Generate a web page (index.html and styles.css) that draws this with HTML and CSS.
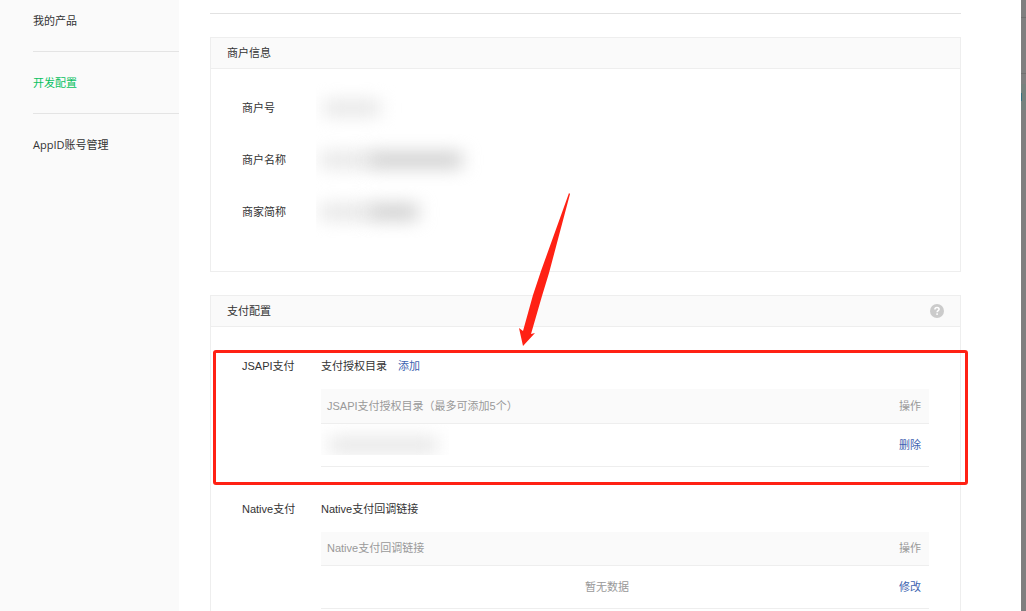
FILE: index.html
```html
<!DOCTYPE html>
<html lang="zh-CN">
<head>
    <meta charset="utf-8">
    <title>开发配置</title>
    <link rel="stylesheet" href="styles.css">
</head>
<body>
    <div class="page">
        <nav class="sidebar">
            <ul>
                <li><a href="#">我的产品</a></li>
                <li><a href="#" class="active">开发配置</a></li>
                <li><a href="#">AppID账号管理</a></li>
            </ul>
        </nav>

        <main class="content">
            <hr>

            <section class="panel">
                <h2 class="panel-header">商户信息</h2>
                <dl class="info">
                    <dt>商户号</dt>
                    <dd><span class="masked short"></span></dd>
                    <dt>商户名称</dt>
                    <dd><span class="masked light"></span><span class="masked long"></span></dd>
                    <dt>商家简称</dt>
                    <dd><span class="masked light"></span><span class="masked medium"></span></dd>
                </dl>
            </section>

            <section class="panel payment">
                <h2 class="panel-header">
                    支付配置
                    <button type="button" class="help" aria-label="帮助">
                        <svg width="14" height="14" viewBox="0 0 14 14">
                            <circle cx="7" cy="7" r="7" fill="#cbcbcb"/>
                            <path d="M4.9 5.5C4.9 4.1 5.8 3.5 7 3.5s2.1.7 2.1 1.8C9.1 6.6 7.1 6.7 7.1 8.3" fill="none" stroke="#fff" stroke-width="1.5"/>
                            <rect x="6.3" y="9.3" width="1.6" height="1.6" fill="#fff"/>
                        </svg>
                    </button>
                </h2>

                <div class="config highlighted">
                    <h3>JSAPI支付</h3>
                    <div class="config-body">
                        <p>支付授权目录 <a href="#">添加</a></p>
                        <table>
                            <thead>
                                <tr><th>JSAPI支付授权目录（最多可添加5个）</th><th class="action">操作</th></tr>
                            </thead>
                            <tbody>
                                <tr><td class="masked-cell"><div><span class="masked path"></span></div></td><td class="action"><a href="#">删除</a></td></tr>
                            </tbody>
                        </table>
                    </div>
                </div>

                <div class="config">
                    <h3>Native支付</h3>
                    <div class="config-body">
                        <p>Native支付回调链接</p>
                        <table>
                            <thead>
                                <tr><th>Native支付回调链接</th><th class="action">操作</th></tr>
                            </thead>
                            <tbody>
                                <tr><td class="empty">暂无数据</td><td class="action"><a href="#">修改</a></td></tr>
                            </tbody>
                        </table>
                    </div>
                </div>

                <svg class="arrow" width="18" height="154" viewBox="0 0 18 154" aria-hidden="true">
                    <path d="M51 0L52 1L31 80L24 103L13 141L17 140L5 153L1 135L5 138L15 102L23 78Z" fill="#ff2114"/>
                </svg>
            </section>
        </main>

        <div class="edge"></div>
    </div>
</body>
</html>
```

FILE: styles.css
```css
* {
    box-sizing: border-box;
}
body {
    margin: 0;
    font: 11px/18px "Liberation Sans", "Noto Sans CJK SC", sans-serif;
    color: #333;
    background: #fff;
}
h2, h3, p, ul, dl, dd {
    margin: 0;
    padding: 0;
    font-size: 11px;
    font-weight: normal;
}
a {
    color: #3d63b0;
    text-decoration: none;
}
.page {
    display: flex;
    height: 100vh;
    overflow: hidden;
}

/* sidebar */
.sidebar {
    flex: 0 0 179px;
    padding-left: 33px;
    background: #fafafa;
}
.sidebar ul {
    list-style: none;
}
.sidebar li {
    padding: 22px 0 21px;
    border-bottom: 1px solid #e4e4e4;
}
.sidebar li:first-child {
    padding-top: 12px;
}
.sidebar li:last-child {
    border-bottom: none;
}
.sidebar a {
    display: block;
    color: #333;
    font-family: "Open Sans", "Noto Sans CJK SC", sans-serif;
}
.sidebar a.active {
    color: #07c160;
}

/* content */
.content {
    flex: 1;
    min-width: 0;
    padding: 13px 60px 0 31px;
}
hr {
    height: 1px;
    margin: 0 0 23px;
    border: none;
    background: #e2e2e2;
}
.panel {
    position: relative;
    margin-bottom: 23px;
    border: 1px solid #eee;
}
.panel.payment {
    padding-bottom: 32px;
}
.panel-header {
    display: flex;
    justify-content: space-between;
    align-items: center;
    height: 31px;
    padding: 0 16px;
    background: #fafafa;
    border-bottom: 1px solid #eee;
}
.help {
    display: flex;
    padding: 0;
    border: none;
    background: none;
    cursor: pointer;
}

.info {
    display: grid;
    grid-template-columns: 74px 1fr;
    grid-auto-rows: 52px;
    padding: 13px 31px 33px;
}
.info dt {
    align-self: center;
}
.info dd {
    display: flex;
    align-items: center;
    overflow: hidden;
}

/* hidden values */
.masked {
    flex: none;
    height: 14px;
    background: #e2e2e2;
    filter: blur(9px);
}
.masked.short {
    width: 56px;
    margin-left: 8px;
}
.masked.light {
    width: 48px;
    margin-left: 4px;
}
.masked.long {
    width: 94px;
    background: #c6c6c6;
}
.masked.medium {
    width: 50px;
    background: #c6c6c6;
}
.masked.path {
    width: 108px;
    margin: 12px 0 0 8px;
}

/* payment config */
.config {
    position: relative;
    display: flex;
    padding: 8px 31px 0;
}
.config.highlighted {
    margin-top: 22px;
    padding-bottom: 25px;
}
.config.highlighted::after {
    content: "";
    position: absolute;
    inset: 1px -8px 7px 2px;
    border: 3px solid #ff2114;
    border-radius: 3px;
    pointer-events: none;
}
.config h3 {
    flex: 0 0 79px;
}
.config-body {
    flex: 1;
}
.config-body p {
    margin-bottom: 14px;
}
.config-body p a {
    margin-left: 8px;
}
table {
    width: 100%;
    border-collapse: collapse;
}
th, td {
    height: 34px;
    padding: 0 6px;
    border-bottom: 1px solid #eee;
    text-align: left;
}
th {
    background: #fafafa;
    color: #999;
    font-weight: normal;
}
td {
    height: 43px;
}
td.masked-cell {
    padding: 0;
    vertical-align: top;
}
.masked-cell div {
    display: flex;
    align-items: center;
    width: 128px;
    height: 31px;
    overflow: hidden;
}
th.action, td.action {
    width: 68px;
    padding-right: 8px;
    text-align: right;
}
td.empty {
    padding-left: 38px;
    color: #999;
    text-align: center;
}
.arrow {
    position: absolute;
    top: -103px;
    left: 307px;
    overflow: visible;
}

/* shaded page behind */
.edge {
    flex: 0 0 5px;
    background:
        linear-gradient(#35707f, #35707f) 0 93px / 1px 8px no-repeat,
        linear-gradient(#7f7f7f 17px, #707070 17px 18px, #7f7f7f 18px 73px, #707070 73px 74px, #7f7f7f 74px 84px, #76827e 84px 110px, #7f7f7f 110px);
}
```
